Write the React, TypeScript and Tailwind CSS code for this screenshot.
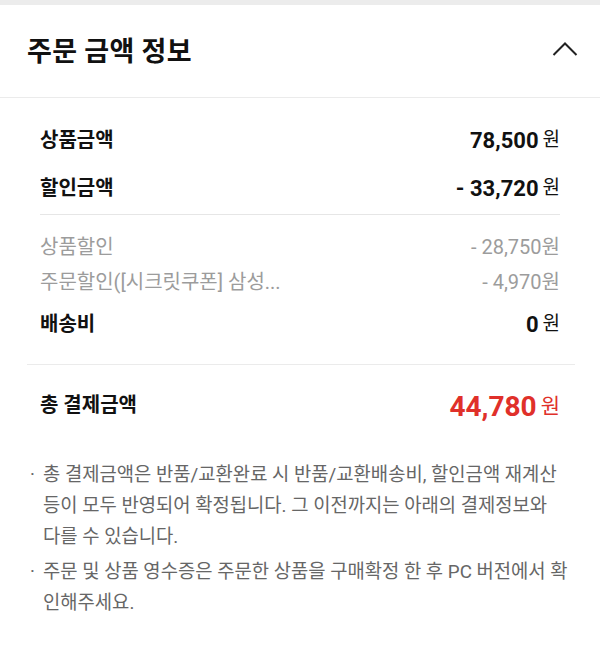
const KR = "font-['Roboto','Noto_Sans_CJK_KR',sans-serif]"

function Won({ className = '' }: { className?: string }) {
  return <span className={`font-normal ${className}`}>원</span>
}

export default function App() {
  return (
    <div className={`w-[600px] h-[648px] bg-white text-[#111] ${KR}`}>
      <div className="h-[5px] bg-[#ececec]" />

      <div className="h-[93px] flex items-center justify-between pl-[27px] pr-[22px] border-b border-[#ebebeb]">
        <h1 className="text-[27px] font-bold tracking-[0.3px] mt-[2px]">주문 금액 정보</h1>
        <svg width="26" height="16" viewBox="0 0 26 16" fill="none" className="-mt-[4px]">
          <path d="M1.5 14L13 2.5L24.5 14" stroke="#222" strokeWidth="2" />
        </svg>
      </div>

      <div className="px-[40px] pt-[26px]">
        <div className="h-[32px] flex items-center justify-between">
          <span className="text-[20px] font-bold">상품금액</span>
          <span className="text-[22px] font-bold flex items-center">
            78,500<Won className="text-[19px] ml-[4px]" />
          </span>
        </div>
        <div className="h-[32px] mt-[16px] flex items-center justify-between">
          <span className="text-[20px] font-bold">할인금액</span>
          <span className="text-[22px] font-bold flex items-center">
            - 33,720<Won className="text-[19px] ml-[4px]" />
          </span>
        </div>
        <div className="h-px bg-[#e6e6e6] mt-[10px]" />

        <div className="mt-[16px] h-[32px] flex items-center justify-between text-[20px] text-[#9c9c9c]">
          <span>상품할인</span>
          <span>- 28,750원</span>
        </div>
        <div className="mt-[3px] h-[32px] flex items-center justify-between text-[20px] text-[#9c9c9c]">
          <span>주문할인([시크릿쿠폰] 삼성...</span>
          <span>- 4,970원</span>
        </div>
        <div className="mt-[10px] h-[32px] flex items-center justify-between">
          <span className="text-[20px] font-bold">배송비</span>
          <span className="text-[22px] font-bold flex items-center">
            0<Won className="text-[19px] ml-[4px]" />
          </span>
        </div>
      </div>

      <div className="ml-[27px] mr-[25px] h-px bg-[#ebebeb] mt-[24px]" />

      <div className="px-[40px] mt-[24px] h-[36px] flex items-center justify-between">
        <span className="text-[20px] font-bold -mt-[4px]">총 결제금액</span>
        <span className="text-[28px] font-bold text-[#e0302a] flex items-center">
          44,780<Won className="text-[21px] ml-[4px]" />
        </span>
      </div>

      <ul className="mt-[35px] pl-[30px] pr-[20px] text-[18.8px] leading-[31px] text-[#666] flex flex-col gap-[4px] whitespace-nowrap">
        <li className="flex">
          <span className="w-[13px] shrink-0">·</span>
          <span>
            총 결제금액은 반품/교환완료 시 반품/교환배송비, 할인금액 재계산<br />
            등이 모두 반영되어 확정됩니다. 그 이전까지는 아래의 결제정보와<br />
            다를 수 있습니다.
          </span>
        </li>
        <li className="flex">
          <span className="w-[13px] shrink-0">·</span>
          <span>
            주문 및 상품 영수증은 주문한 상품을 구매확정 한 후 PC 버전에서 확<br />
            인해주세요.
          </span>
        </li>
      </ul>
    </div>
  )
}
